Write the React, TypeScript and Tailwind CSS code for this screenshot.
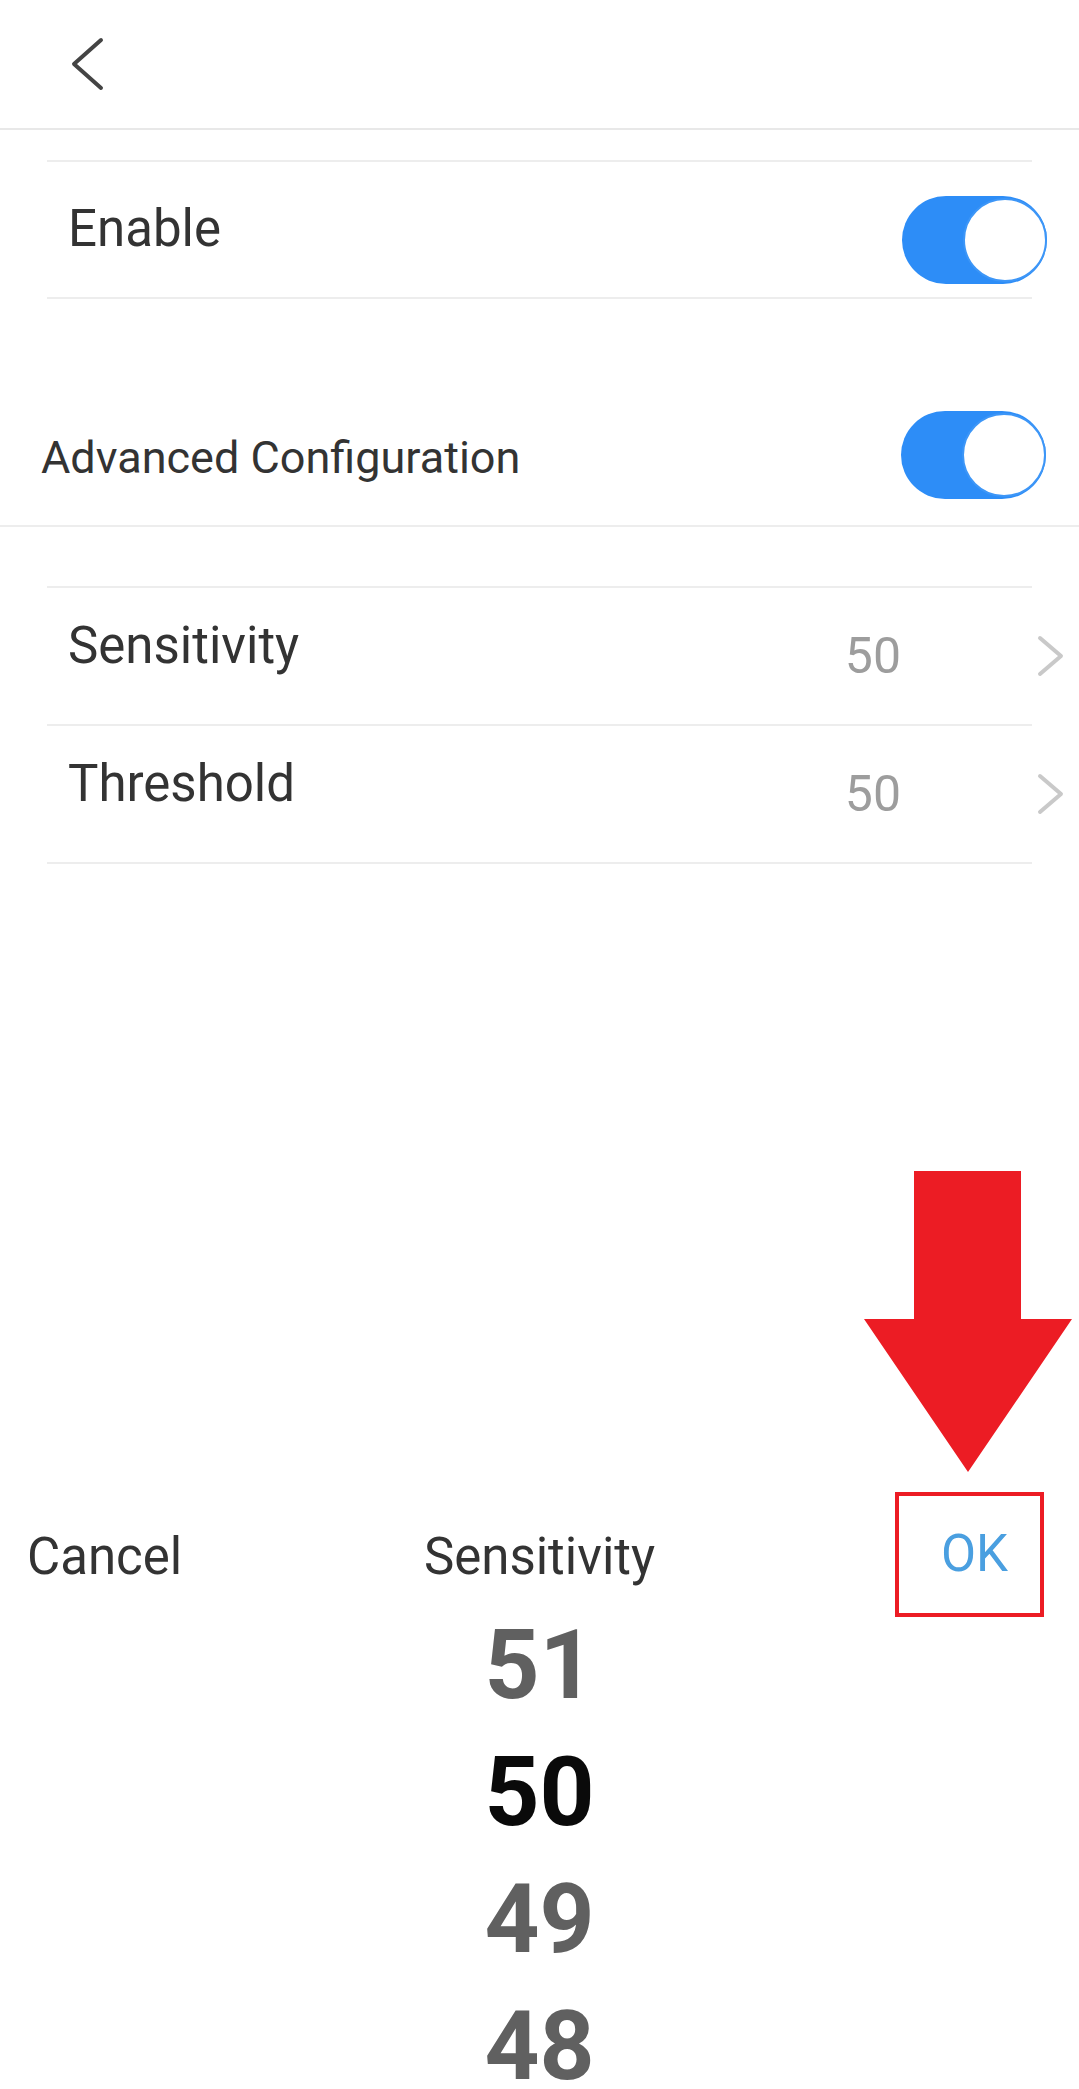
import React from "react";

function Toggle() {
  return (
    <div className="relative w-[145px] h-[88px] rounded-full bg-[#2d8df7] shrink-0">
      <div className="absolute right-0 top-[2px] w-[84px] h-[84px] rounded-full bg-white border-2 border-[#3d96f7]" />
    </div>
  );
}

function Chevron() {
  return (
    <svg width="32" height="48" viewBox="0 0 32 48" className="shrink-0 -mr-[34px]">
      <polyline points="6,6 27,24 6,42" fill="none" stroke="#c9c9c9" strokeWidth="4" strokeLinecap="round" strokeLinejoin="round" />
    </svg>
  );
}

function ValueRow({ label, value }: { label: string; value: string }) {
  return (
    <div className="flex items-center h-[138px] border-b-2 border-[#ededed]">
      <span className="pl-[21px] mb-[19px] text-[51px] text-[#333333]">{label}</span>
      <span className="ml-auto mr-[133px] text-[50px] text-[#9d9d9d]">{value}</span>
      <Chevron />
    </div>
  );
}

export default function App() {
  return (
    <div
      className="w-[1079px] h-[2089px] overflow-hidden bg-white flex flex-col"
      style={{ fontFamily: "Roboto, 'Noto Sans', sans-serif" }}
    >
      {/* Header */}
      <div className="h-[130px] border-b-2 border-[#e8e8e8] shrink-0 flex items-start">
        <svg width="40" height="60" viewBox="0 0 40 60" className="ml-[68px] mt-[34px]">
          <polyline points="33,6 6,30 33,54" fill="none" stroke="#444444" strokeWidth="4" strokeLinecap="round" strokeLinejoin="round" />
        </svg>
      </div>

      {/* Enable */}
      <div className="mx-[47px] mt-[30px] border-t-2 border-b-2 border-[#ededed] h-[139px] flex items-center shrink-0">
        <span className="pl-[21px] text-[51px] text-[#333333]">Enable</span>
        <div className="ml-auto -mr-[15px] mt-[20px]">
          <Toggle />
        </div>
      </div>

      {/* Advanced Configuration */}
      <div className="border-b-2 border-[#ededed] h-[228px] flex items-end shrink-0">
        <div className="flex items-center w-full pb-[26px]">
          <span className="pl-[41px] mt-[6px] text-[45px] text-[#333333]">Advanced Configuration</span>
          <div className="ml-auto mr-[33px]">
            <Toggle />
          </div>
        </div>
      </div>

      {/* Values */}
      <div className="mx-[47px] mt-[59px] border-t-2 border-[#ededed] shrink-0">
        <ValueRow label="Sensitivity" value="50" />
        <ValueRow label="Threshold" value="50" />
      </div>

      {/* Picker */}
      <div className="mt-[628px] shrink-0">
        <div className="grid grid-cols-[1fr_auto_1fr] h-[110px] items-start">
          <span className="justify-self-start pl-[27px] mt-[27px] text-[51px] text-[#333333]">Cancel</span>
          <span className="mt-[27px] text-[51px] text-[#333333]">Sensitivity</span>
          <div className="justify-self-end mr-[35px] relative">
            <svg
              width="210"
              height="302"
              viewBox="0 0 210 302"
              className="absolute bottom-full mb-[19px] left-[-31px]"
            >
              <polygon points="50,0 157,0 157,148 208,148 104,301 0,148 50,148" fill="#ec1c24" />
            </svg>
            <div className="w-[149px] h-[125px] border-4 border-[#ec1c24] flex items-center justify-center pl-[10px]">
              <span className="text-[51px] text-[#4a9fe0]">OK</span>
            </div>
          </div>
        </div>
        <div className="flex flex-col items-center font-bold text-[96px]">
          <span className="h-[127px] leading-[127px] text-[#606060]">51</span>
          <span className="h-[127px] leading-[127px] text-[#0a0a0a]">50</span>
          <span className="h-[127px] leading-[127px] text-[#606060]">49</span>
          <span className="h-[127px] leading-[127px] text-[#606060]">48</span>
        </div>
      </div>
    </div>
  );
}
